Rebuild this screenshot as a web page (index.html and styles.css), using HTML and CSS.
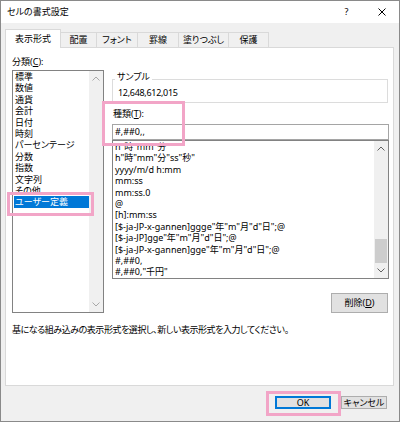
FILE: index.html
```html
<!DOCTYPE html>
<html lang="ja">
<head>
<meta charset="utf-8">
<title>セルの書式設定</title>
<link rel="stylesheet" href="styles.css">
</head>
<body>
<div class="dialog">
  <div class="titlebar">
    <div class="title">セルの書式設定</div>
    <div class="tb-btn">?</div>
    <div class="tb-btn">
      <svg width="8" height="8" viewBox="0 0 8 8"><path d="M0.5 0.5 L7.5 7.5 M7.5 0.5 L0.5 7.5" stroke="#000" stroke-width="1" fill="none"/></svg>
    </div>
  </div>

  <div class="tabs">
    <div class="tab active">表示形式</div>
    <div class="tab">配置</div>
    <div class="tab">フォント</div>
    <div class="tab">罫線</div>
    <div class="tab">塗りつぶし</div>
    <div class="tab">保護</div>
  </div>

  <div class="panel">
    <div class="main">
      <div class="col-left">
        <div class="label">分類(<u>C</u>):</div>
        <div class="listbox cat-list">
          <div class="items">
            <div class="item">標準</div>
            <div class="item">数値</div>
            <div class="item">通貨</div>
            <div class="item">会計</div>
            <div class="item">日付</div>
            <div class="item">時刻</div>
            <div class="item">パーセンテージ</div>
            <div class="item">分数</div>
            <div class="item">指数</div>
            <div class="item">文字列</div>
            <div class="item">その他</div>
            <div class="item sel">ユーザー定義</div>
          </div>
          <div class="sb sb-disabled">
            <div class="sb-arrow"><svg width="8" height="5" viewBox="0 0 8 5"><polyline points="0.5,4.5 4,1 7.5,4.5" fill="none" stroke="currentColor"/></svg></div>
            <div class="sb-track"></div>
            <div class="sb-arrow"><svg width="8" height="5" viewBox="0 0 8 5"><polyline points="0.5,0.5 4,4 7.5,0.5" fill="none" stroke="currentColor"/></svg></div>
          </div>
        </div>
      </div>

      <div class="col-right">
        <fieldset class="group">
          <legend>サンプル</legend>
          <div class="sample">12,648,612,015</div>
        </fieldset>
        <div class="label type-label">種類(<u>T</u>):</div>
        <div class="textbox">#,##0,,</div>
        <div class="listbox fmt-list">
          <div class="items">
            <div class="item">h"時"mm"分"</div>
            <div class="item">h"時"mm"分"ss"秒"</div>
            <div class="item">yyyy/m/d h:mm</div>
            <div class="item">mm:ss</div>
            <div class="item">mm:ss.0</div>
            <div class="item">@</div>
            <div class="item">[h]:mm:ss</div>
            <div class="item">[$-ja-JP-x-gannen]ggge"年"m"月"d"日";@</div>
            <div class="item">[$-ja-JP]gge"年"m"月"d"日";@</div>
            <div class="item">[$-ja-JP-x-gannen]gge"年"m"月"d"日";@</div>
            <div class="item">#,##0,</div>
            <div class="item">#,##0,"千円"</div>
          </div>
          <div class="sb">
            <div class="sb-arrow"><svg width="8" height="5" viewBox="0 0 8 5"><polyline points="0.5,4.5 4,1 7.5,4.5" fill="none" stroke="currentColor"/></svg></div>
            <div class="sb-track"><div class="sb-thumb"></div></div>
            <div class="sb-arrow"><svg width="8" height="5" viewBox="0 0 8 5"><polyline points="0.5,0.5 4,4 7.5,0.5" fill="none" stroke="currentColor"/></svg></div>
          </div>
        </div>
        <div class="btn btn-del">削除(<u>D</u>)</div>
      </div>
    </div>
    <div class="desc">基になる組み込みの表示形式を選択し、新しい表示形式を入力してください。</div>
  </div>

  <div class="actions">
    <div class="btn btn-ok">OK</div>
    <div class="btn btn-cancel">キャンセル</div>
  </div>

  <div class="mark mark-tab"></div>
  <div class="mark mark-item"></div>
  <div class="mark mark-type"></div>
  <div class="mark mark-ok"></div>
</div>
</body>
</html>
```
FILE: styles.css
```css
* { box-sizing: border-box; }
html, body { margin: 0; padding: 0; }
body {
  width: 400px;
  height: 422px;
  overflow: hidden;
  font-family: "Noto Sans", "Noto Sans CJK JP", sans-serif;
  font-size: 9px;
  line-height: 12px;
  color: #000;
  font-feature-settings: "palt";
  background: #fff;
}
.dialog {
  position: relative;
  width: 400px;
  height: 422px;
  border: 1px solid #8a8a8a;
  background: #f0f0f0;
  display: flex;
  flex-direction: column;
}
.titlebar {
  flex: none;
  height: 22px;
  background: #fff;
  display: flex;
  align-items: center;
  padding-left: 6px;
}
.title { flex: 1; }
.tb-btn {
  width: 35px;
  height: 22px;
  display: flex;
  align-items: center;
  justify-content: center;
}

.tabs {
  flex: none;
  display: grid;
  grid-template-columns: 56px 36px 41px 41px 50px 40px;
  align-items: end;
  height: 18px;
  margin: 6px 0 0 4px;
}
.tab {
  height: 15px;
  border-top: 1px solid #d9d9d9;
  border-right: 1px solid #d9d9d9;
  background: #f0f0f0;
  text-align: center;
  line-height: 14px;
  white-space: nowrap;
}
.tab.active {
  height: 19px;
  margin-bottom: -1px;
  border-left: 1px solid #d9d9d9;
  background: #fff;
  line-height: 18px;
  position: relative;
  z-index: 1;
}

.panel {
  flex: none;
  margin-left: 4px;
  width: 389px;
  height: 339px;
  border: 1px solid #d9d9d9;
  background: #fff;
  padding: 8px 4px 0 6px;
}
.main { display: flex; gap: 8px; }
.col-left { width: 92px; flex: none; }
.col-right {
  width: 277px;
  flex: none;
  display: flex;
  flex-direction: column;
}
.label { height: 12px; white-space: nowrap; }

.listbox {
  border: 1px solid #828282;
  background: #fff;
  display: flex;
}
.items {
  flex: 1;
  overflow: hidden;
  line-height: 11.4px;
  white-space: nowrap;
}
.cat-list { margin-top: 2px; height: 243px; }
.cat-list .item { margin-left: 1px; padding-left: 1px; }
.item.sel { background: #0078d7; color: #fff; }

.fmt-list { height: 139px; }
.fmt-list .items { padding-left: 2px; }

.sb {
  width: 14px;
  flex: none;
  background: #f0f0f0;
  display: flex;
  flex-direction: column;
  color: #606060;
}
.sb-disabled { color: #a8a8a8; }
.sb-arrow {
  height: 15px;
  display: flex;
  align-items: center;
  justify-content: center;
}
.sb-arrow svg { display: block; }
.sb-track {
  flex: 1;
  display: flex;
  flex-direction: column;
  justify-content: flex-end;
}
.sb-thumb {
  height: 24px;
  margin: 0 1px;
  background: #cdcdcd;
}

.group {
  margin: 15px 0 0 0;
  padding: 0 0 3px 0;
  width: 276px;
  min-width: 0;
  border: 1px solid #dcdcdc;
}
.group legend {
  margin-left: 2px;
  padding: 0 2px 4px 2px;
  line-height: 12px;
}
.sample { padding-left: 5px; height: 12px; letter-spacing: -0.3px; }

.type-label { margin-top: 5px; padding-left: 1px; }
.textbox {
  margin-top: 4px;
  height: 16px;
  border: 1px solid #a5a5a5;
  padding-left: 2px;
  line-height: 14px;
  background: #fff;
}

.btn {
  background: #e1e1e1;
  border: 1px solid #adadad;
  text-align: center;
  white-space: nowrap;
}
.btn-del {
  align-self: flex-end;
  margin: 14px 1px 0 0;
  width: 57px;
  height: 20px;
  line-height: 18px;
}
.desc { margin-top: 11px; white-space: nowrap; letter-spacing: -0.45px; }

.actions {
  flex: none;
  display: flex;
  justify-content: flex-end;
  gap: 10px;
  margin: 10px 12px 0 0;
}
.btn-ok, .btn-cancel { height: 13px; line-height: 11px; }
.btn-ok {
  width: 56px;
  border-color: #0078d7;
  box-shadow: inset 0 0 0 1px #0078d7;
}
.btn-cancel { width: 46px; }

.mark {
  position: absolute;
  border: 3px solid #f2a5c7;
  pointer-events: none;
}
.mark-tab { left: 4px; top: 28px; width: 56px; height: 18px; }
.mark-item { left: 6px; top: 191px; width: 87px; height: 24px; }
.mark-type { left: 101px; top: 100px; width: 83px; height: 45px; }
.mark-ok { left: 265px; top: 390px; width: 75px; height: 25px; }
```
